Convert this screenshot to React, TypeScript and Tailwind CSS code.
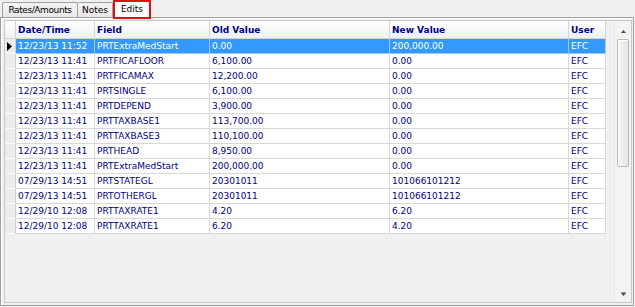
import React from "react";

type Edit = {
  date: string;
  field: string;
  oldValue: string;
  newValue: string;
  user: string;
};

const edits: Edit[] = [
  { date: "12/23/13 11:52", field: "PRTExtraMedStart", oldValue: "0.00", newValue: "200,000.00", user: "EFC" },
  { date: "12/23/13 11:41", field: "PRTFICAFLOOR", oldValue: "6,100.00", newValue: "0.00", user: "EFC" },
  { date: "12/23/13 11:41", field: "PRTFICAMAX", oldValue: "12,200.00", newValue: "0.00", user: "EFC" },
  { date: "12/23/13 11:41", field: "PRTSINGLE", oldValue: "6,100.00", newValue: "0.00", user: "EFC" },
  { date: "12/23/13 11:41", field: "PRTDEPEND", oldValue: "3,900.00", newValue: "0.00", user: "EFC" },
  { date: "12/23/13 11:41", field: "PRTTAXBASE1", oldValue: "113,700.00", newValue: "0.00", user: "EFC" },
  { date: "12/23/13 11:41", field: "PRTTAXBASE3", oldValue: "110,100.00", newValue: "0.00", user: "EFC" },
  { date: "12/23/13 11:41", field: "PRTHEAD", oldValue: "8,950.00", newValue: "0.00", user: "EFC" },
  { date: "12/23/13 11:41", field: "PRTExtraMedStart", oldValue: "200,000.00", newValue: "0.00", user: "EFC" },
  { date: "07/29/13 14:51", field: "PRTSTATEGL", oldValue: "20301011", newValue: "101066101212", user: "EFC" },
  { date: "07/29/13 14:51", field: "PRTOTHERGL", oldValue: "20301011", newValue: "101066101212", user: "EFC" },
  { date: "12/29/10 12:08", field: "PRTTAXRATE1", oldValue: "4.20", newValue: "6.20", user: "EFC" },
  { date: "12/29/10 12:08", field: "PRTTAXRATE1", oldValue: "6.20", newValue: "4.20", user: "EFC" },
];

const headers = ["Date/Time", "Field", "Old Value", "New Value", "User"];

const Tabs = () => (
  <div className="flex items-end h-[17px] pl-[2px]">
    <div className="w-[76px] h-[15px] border border-b-0 border-[#a0a0a0] rounded-t-[2px] bg-gradient-to-b from-[#f4f4f4] to-[#e8e8e8] text-center leading-[15px] tracking-[-0.4px]">
      Rates/Amounts
    </div>
    <div className="w-[35px] h-[15px] border border-l-0 border-b-0 border-[#a0a0a0] rounded-t-[2px] bg-gradient-to-b from-[#f4f4f4] to-[#e8e8e8] text-center leading-[15px]">
      Notes
    </div>
    {/* selected tab, outlined in red */}
    <div className="relative z-10 -mb-[2px] w-[38px] h-[19px] border-2 border-[#e01010] bg-[#fbfbfb] text-center leading-[13px] pt-[1px]">
      Edits
    </div>
  </div>
);

const Scrollbar = () => (
  <div className="w-[17px] flex flex-col bg-[#f3f3f3] border-l border-[#e6e6e6]">
    <div className="h-[17px] flex items-center justify-center pt-[3px]">
      <svg width="5" height="3" viewBox="0 0 5 3">
        <path d="M2.5 0 L5 3 L0 3 Z" fill="#4a4a4a" />
      </svg>
    </div>
    <div className="mt-[1px] mx-[2px] h-[128px] rounded-[2px] border border-[#b9b9b9] bg-gradient-to-r from-[#f6f6f6] to-[#e4e4e4] shadow-[inset_1px_1px_0_#ffffff]" />
    <div className="flex-1" />
    <div className="h-[17px] flex items-center justify-center">
      <svg width="5" height="4" viewBox="0 0 5 4">
        <path d="M0 0 H5" stroke="#4a4a4a" strokeWidth="1" />
        <path d="M0 1 L5 1 L2.5 4 Z" fill="#4a4a4a" />
      </svg>
    </div>
  </div>
);

const App = () => {
  const cols = "grid grid-cols-[11px_79px_115px_180px_179px_37px] w-[601px]";

  return (
    <div
      className="w-[635px] h-[307px] bg-[#f0f0f0] text-[9px] text-black overflow-hidden"
      style={{ fontFamily: '"DejaVu Sans", "Liberation Sans", sans-serif' }}
    >
      <Tabs />

      {/* tab page */}
      <div className="w-[634px] h-[289px] border border-[#a0a0a0] shadow-[inset_1px_1px_0_#ffffff] pt-[2px] pl-[3px] pr-px pb-[2px]">
        <div className="h-full flex border border-[#c8c8c8] bg-[#f0f0f0]">
          <div className="flex-1">
            {/* header */}
            <div className={cols}>
              <div className="h-[18px] border-r border-b border-[#d5d5d5] bg-gradient-to-b from-white to-[#f1f1f1]" />
              {headers.map((h) => (
                <div
                  key={h}
                  className="h-[18px] border-r border-b border-[#d5d5d5] bg-gradient-to-b from-white to-[#f1f1f1] px-[2px] pt-px leading-[17px] font-bold text-[#000080] whitespace-nowrap overflow-hidden"
                >
                  {h}
                </div>
              ))}
            </div>

            {/* rows */}
            {edits.map((row, i) => {
              const selected = i === 0;
              const cell = selected
                ? "h-[15px] border-r border-b border-[#9cc9f5] bg-[#3399ff] text-white px-[2px] leading-[14px] whitespace-nowrap overflow-hidden"
                : "h-[15px] border-r border-b border-[#d8d8d8] bg-white text-[#000080] px-[2px] leading-[14px] whitespace-nowrap overflow-hidden";
              return (
                <div key={i} className={cols}>
                  <div className="h-[15px] border-r border-b border-r-[#d0d0d0] border-b-[#fafafa] bg-[#ececec] flex items-center pl-[2px]">
                    {selected && (
                      <svg width="5" height="9" viewBox="0 0 5 9">
                        <path d="M0 0 L5 4.5 L0 9 Z" fill="#000" />
                      </svg>
                    )}
                  </div>
                  <div className={cell}>{row.date}</div>
                  <div className={cell}>{row.field}</div>
                  <div className={cell}>{row.oldValue}</div>
                  <div className={cell}>{row.newValue}</div>
                  <div className={cell}>{row.user}</div>
                </div>
              );
            })}
          </div>

          <Scrollbar />
        </div>
      </div>
    </div>
  );
};

export default App;
